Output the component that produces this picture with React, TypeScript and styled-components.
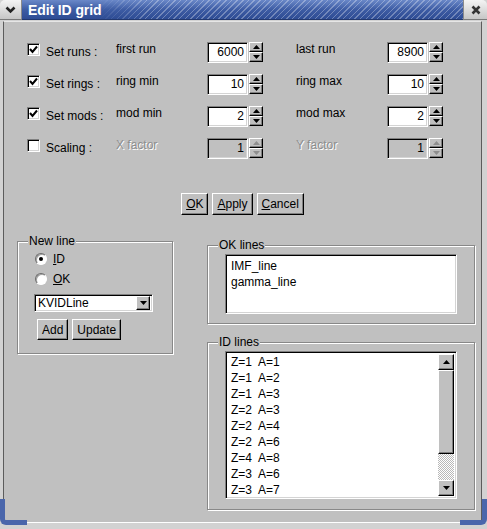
import React from 'react';
import styled, { createGlobalStyle, css } from 'styled-components';

const Global = createGlobalStyle`
  html, body { margin: 0; padding: 0; background: #c0c0c0; }
  body { font-family: "Liberation Sans", Arial, sans-serif; font-size: 12px; color: #000; }
  * { box-sizing: border-box; }
`;

const raised = css`
  border: 1px solid;
  border-color: #ffffff #000000 #000000 #ffffff;
  box-shadow: inset -1px -1px 0 #808080;
  background: #c0c0c0;
`;

const sunken = css`
  border: 1px solid;
  border-color: #808080 #ffffff #ffffff #808080;
  box-shadow: inset 1px 1px 0 #000000, inset -1px -1px 0 #d4d4d4;
`;

const Window = styled.div`
  position: relative;
  width: 487px;
  height: 529px;
  background: #d2d2d2;
  display: flex;
  flex-direction: column;
  overflow: hidden;
  &::before,
  &::after {
    content: '';
    position: absolute;
    bottom: 4px;
    width: 22px;
    height: 21px;
    border: 5px solid #4a66ab;
  }
  &::before {
    left: 0;
    border-top: none;
    border-right: none;
    border-bottom-left-radius: 6px;
  }
  &::after {
    right: 0;
    border-top: none;
    border-left: none;
    border-bottom-right-radius: 6px;
  }
`;

const TitleBar = styled.div`
  display: flex;
  height: 20px;
  flex: none;
`;

const TitleButton = styled.div<{ $side: 'left' | 'right' }>`
  width: ${(p) => (p.$side === 'left' ? 22 : 24)}px;
  background: linear-gradient(#f4f4f4, #c6c6c6);
  display: flex;
  align-items: center;
  justify-content: center;
  border-bottom: 1px solid #7a7a7a;
  ${(p) =>
    p.$side === 'left'
      ? 'border-top-left-radius: 5px; border-right: 1px solid #8a8a8a;'
      : 'border-top-right-radius: 5px; border-left: 1px solid #8a8a8a;'}
`;

const Title = styled.div`
  flex: 1;
  position: relative;
  display: flex;
  align-items: center;
  padding-left: 6px;
  overflow: hidden;
  background: linear-gradient(#6a88c8, #3d5ca4 50%, #2e4c94);
  border-bottom: 1px solid #22386f;
  &::after {
    content: '';
    position: absolute;
    inset: 0;
    background: repeating-linear-gradient(135deg, rgba(255, 255, 255, 0.3) 0 1px, transparent 1px 4px);
    -webkit-mask-image: linear-gradient(to right, transparent 75px, #000 125px);
    mask-image: linear-gradient(to right, transparent 75px, #000 125px);
  }
`;

const TitleText = styled.span`
  position: relative;
  z-index: 1;
  color: #fff;
  font-weight: bold;
  font-size: 14px;
  letter-spacing: -0.1px;
`;

const Client = styled.div`
  flex: 1;
  margin: 1px 5px 6px 3px;
  background: #c0c0c0;
  border-top: 1px solid #e6e6e6;
  border-left: 1px solid #5c5c5c;
  border-right: 1px solid #5c5c5c;
  border-bottom: 1px solid #ffffff;
  display: flex;
  flex-direction: column;
`;

const Grid = styled.div`
  display: grid;
  grid-template-columns: 19px 70px 91px 89px 91px auto;
  grid-auto-rows: 32px;
  align-items: center;
  padding: 14px 0 0 23px;
`;

const CheckBox = styled.div`
  width: 13px;
  height: 13px;
  margin-bottom: 6px;
  background: #fff;
  ${sunken};
  display: flex;
  align-items: center;
  justify-content: center;
`;

const RowLabel = styled.div`
  white-space: pre;
`;

const FieldLabel = styled.div<{ $disabled?: boolean }>`
  padding-bottom: 7px;
  white-space: pre;
  color: ${(p) => (p.$disabled ? '#8e8e8e' : '#000')};
  text-shadow: ${(p) => (p.$disabled ? '1px 1px 0 #fff' : 'none')};
`;

const Spin = styled.div`
  display: flex;
  gap: 1px;
  align-items: flex-start;
`;

const Entry = styled.div<{ $disabled?: boolean }>`
  width: 41px;
  height: 21px;
  ${sunken};
  background: ${(p) => (p.$disabled ? '#c0c0c0' : '#fff')};
  text-align: right;
  padding-right: 3px;
  line-height: 19px;
`;

const Arrows = styled.div`
  display: flex;
  flex-direction: column;
  width: 14px;
`;

const ArrowBtn = styled.div`
  height: 10px;
  ${raised};
  display: flex;
  align-items: center;
  justify-content: center;
`;

const ButtonRow = styled.div`
  display: flex;
  justify-content: center;
  gap: 4px;
  margin-top: 29px;
`;

const Button = styled.div`
  height: 22px;
  padding: 0 4px;
  ${raised};
  display: flex;
  align-items: center;
  line-height: 14px;
`;

const SmallButton = styled(Button)`
  height: 21px;
`;

const Bottom = styled.div`
  display: flex;
  align-items: flex-start;
  gap: 34px;
  padding-left: 13px;
  margin-top: 19px;
`;

const RightColumn = styled.div`
  display: flex;
  flex-direction: column;
  padding-top: 4px;
`;

const Group = styled.div<{ $w: number; $mt?: number }>`
  width: ${(p) => p.$w}px;
  margin-top: ${(p) => p.$mt ?? 7}px;
  border: 1px solid #888;
  box-shadow: inset 1px 1px 0 #fff, 1px 1px 0 #fff;
  display: flex;
  flex-direction: column;
`;

const Legend = styled.div`
  align-self: flex-start;
  margin: -8px 0 0 10px;
  padding: 0 1px;
  line-height: 14px;
  background: #c0c0c0;
`;

const NewLineBody = styled.div`
  display: flex;
  flex-direction: column;
  align-items: flex-start;
  padding: 1px 0 13px 16px;
`;

const RadioRow = styled.div`
  display: flex;
  align-items: center;
  gap: 6px;
  height: 20px;
  margin-left: 1px;
`;

const Radio = styled.div<{ $on?: boolean }>`
  width: 12px;
  height: 12px;
  border-radius: 50%;
  background: #fff;
  border: 1px solid;
  border-color: #6a6a6a #ffffff #ffffff #6a6a6a;
  box-shadow: inset 1px 1px 0 #a0a0a0;
  display: flex;
  align-items: center;
  justify-content: center;
  &::after {
    content: '';
    width: 4px;
    height: 4px;
    border-radius: 50%;
    background: ${(p) => (p.$on ? '#000' : 'transparent')};
  }
`;

const Combo = styled.div`
  width: 119px;
  height: 18px;
  margin-top: 5px;
  background: #fff;
  ${sunken};
  display: flex;
  align-items: center;
  justify-content: space-between;
  padding: 0 2px 0 3px;
`;

const ComboArrow = styled.div`
  width: 14px;
  height: 14px;
  ${raised};
  display: flex;
  align-items: center;
  justify-content: center;
`;

const ActionRow = styled.div`
  display: flex;
  gap: 4px;
  margin: 7px 0 0 3px;
`;

const ListBody = styled.div<{ $pb: number }>`
  padding: 2px 17px ${(p) => p.$pb}px 17px;
`;

const ListBox = styled.div<{ $h: number }>`
  height: ${(p) => p.$h}px;
  background: #fff;
  ${sunken};
  padding: 2px;
  display: flex;
`;

const Items = styled.div<{ $pt?: number }>`
  flex: 1;
  padding: ${(p) => p.$pt ?? 0}px 0 0 3px;
`;

const Item = styled.div`
  height: 16px;
  line-height: 16px;
  white-space: pre;
`;

const ScrollBar = styled.div`
  width: 16px;
  display: flex;
  flex-direction: column;
  background: repeating-conic-gradient(#ffffff 0 25%, #b8b8b8 0 50%) 0 0 / 2px 2px;
`;

const ScrollArrow = styled.div`
  height: 16px;
  ${raised};
  display: flex;
  align-items: center;
  justify-content: center;
`;

const Thumb = styled.div`
  height: 84px;
  ${raised};
`;

const Trough = styled.div`
  flex: 1;
`;

const Tri = ({ dir, color = '#000' }: { dir: 'up' | 'down'; color?: string }) => (
  <svg width="7" height="4" viewBox="0 0 7 4">
    <polygon points={dir === 'up' ? '3.5,0 7,4 0,4' : '0,0 7,0 3.5,4'} fill={color} />
  </svg>
);

const SpinBox = ({ value, disabled }: { value: string; disabled?: boolean }) => (
  <Spin>
    <Entry $disabled={disabled}>{value}</Entry>
    <Arrows>
      <ArrowBtn>
        <Tri dir="up" color={disabled ? '#8e8e8e' : '#000'} />
      </ArrowBtn>
      <ArrowBtn>
        <Tri dir="down" color={disabled ? '#8e8e8e' : '#000'} />
      </ArrowBtn>
    </Arrows>
  </Spin>
);

const Check = ({ checked }: { checked: boolean }) => (
  <CheckBox>
    {checked && (
      <svg width="9" height="9" viewBox="0 0 9 9">
        <polyline points="1,4 3.5,7 8,1.5" fill="none" stroke="#000" strokeWidth="2" />
      </svg>
    )}
  </CheckBox>
);

const rows = [
  { checked: true, label: 'Set runs :', a: 'first run', av: '6000', b: 'last run', bv: '8900' },
  { checked: true, label: 'Set rings :', a: 'ring min', av: '10', b: 'ring max', bv: '10' },
  { checked: true, label: 'Set mods :', a: 'mod min', av: '2', b: 'mod max', bv: '2' },
  { checked: false, label: 'Scaling :', a: 'X factor', av: '1', b: 'Y factor', bv: '1', disabled: true },
];

const idLines = ['Z=1  A=1', 'Z=1  A=2', 'Z=1  A=3', 'Z=2  A=3', 'Z=2  A=4', 'Z=2  A=6', 'Z=4  A=8', 'Z=3  A=6', 'Z=3  A=7'];

export default function App() {
  return (
    <>
      <Global />
      <Window>
        <TitleBar>
          <TitleButton $side="left">
            <svg width="11" height="8" viewBox="0 0 11 8">
              <polyline points="1.5,1.5 5.5,5.5 9.5,1.5" fill="none" stroke="#222" strokeWidth="2.6" />
            </svg>
          </TitleButton>
          <Title>
            <TitleText>Edit ID grid</TitleText>
          </Title>
          <TitleButton $side="right">
            <svg width="10" height="10" viewBox="0 0 10 10">
              <path d="M1.5 1.5 L8.5 8.5 M8.5 1.5 L1.5 8.5" stroke="#333" strokeWidth="2.6" />
            </svg>
          </TitleButton>
        </TitleBar>
        <Client>
          <Grid>
            {rows.map((r) => (
              <React.Fragment key={r.label}>
                <Check checked={r.checked} />
                <RowLabel>{r.label}</RowLabel>
                <FieldLabel $disabled={r.disabled}>{r.a}</FieldLabel>
                <SpinBox value={r.av} disabled={r.disabled} />
                <FieldLabel $disabled={r.disabled}>{r.b}</FieldLabel>
                <SpinBox value={r.bv} disabled={r.disabled} />
              </React.Fragment>
            ))}
          </Grid>
          <ButtonRow>
            <Button>
              <u>O</u>K
            </Button>
            <Button>
              <u>A</u>pply
            </Button>
            <Button>
              <u>C</u>ancel
            </Button>
          </ButtonRow>
          <Bottom>
            <Group $w={156}>
              <Legend>New line</Legend>
              <NewLineBody>
                <RadioRow>
                  <Radio $on />
                  <span>
                    <u>I</u>D
                  </span>
                </RadioRow>
                <RadioRow>
                  <Radio />
                  <span>
                    <u>O</u>K
                  </span>
                </RadioRow>
                <Combo>
                  <span>KVIDLine</span>
                  <ComboArrow>
                    <Tri dir="down" />
                  </ComboArrow>
                </Combo>
                <ActionRow>
                  <SmallButton>Add</SmallButton>
                  <SmallButton>Update</SmallButton>
                </ActionRow>
              </NewLineBody>
            </Group>
            <RightColumn>
              <Group $w={268}>
                <Legend>OK lines</Legend>
                <ListBody $pb={9}>
                  <ListBox $h={60}>
                    <Items $pt={1}>
                      <Item>IMF_line</Item>
                      <Item>gamma_line</Item>
                    </Items>
                  </ListBox>
                </ListBody>
              </Group>
              <Group $w={268} $mt={18}>
                <Legend>ID lines</Legend>
                <ListBody $pb={10}>
                  <ListBox $h={148}>
                    <Items>
                      {idLines.map((l, i) => (
                        <Item key={i}>{l}</Item>
                      ))}
                    </Items>
                    <ScrollBar>
                      <ScrollArrow>
                        <Tri dir="up" />
                      </ScrollArrow>
                      <Thumb />
                      <Trough />
                      <ScrollArrow>
                        <Tri dir="down" />
                      </ScrollArrow>
                    </ScrollBar>
                  </ListBox>
                </ListBody>
              </Group>
            </RightColumn>
          </Bottom>
        </Client>
      </Window>
    </>
  );
}
